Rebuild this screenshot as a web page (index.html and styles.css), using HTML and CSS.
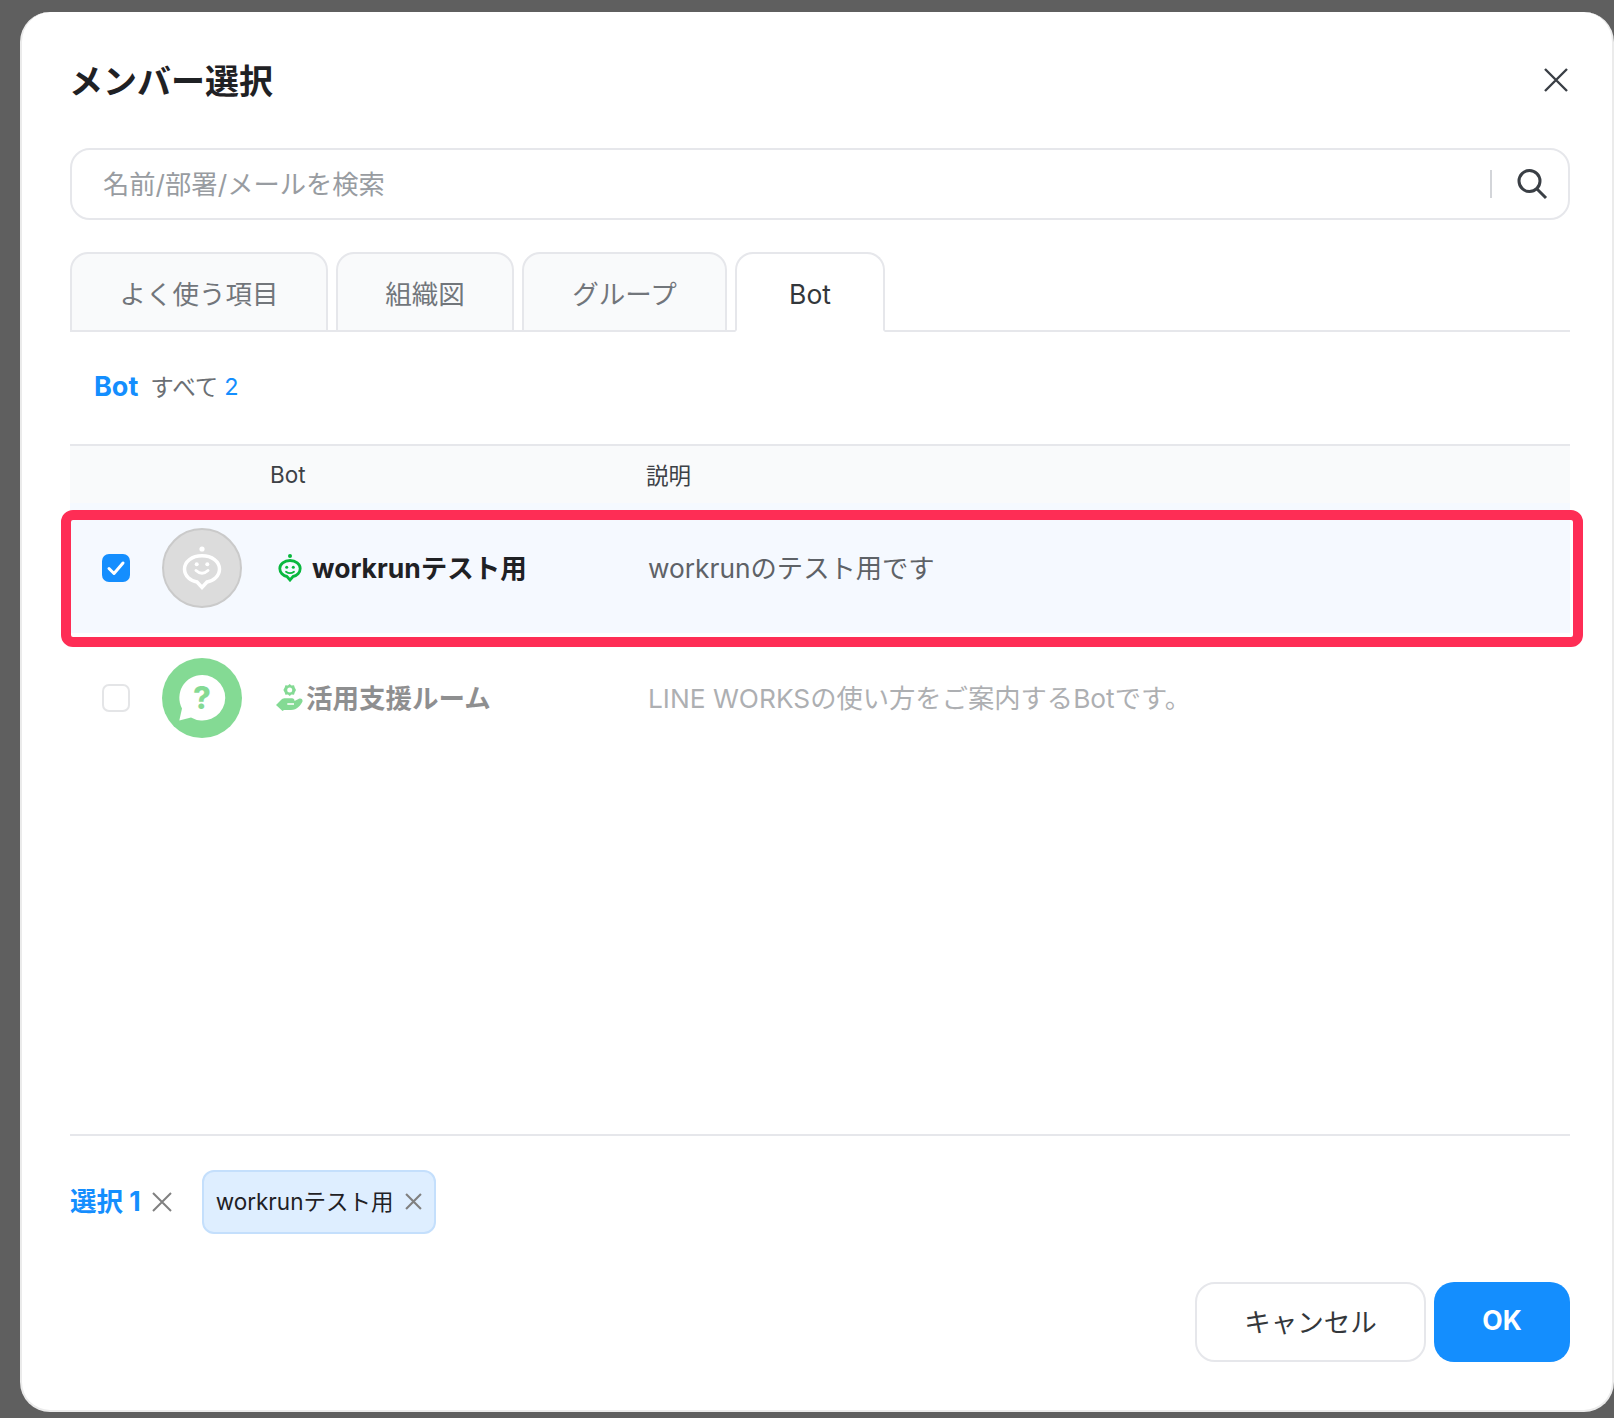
FILE: index.html
```html
<!DOCTYPE html>
<html lang="ja">
<head>
<meta charset="utf-8">
<title>メンバー選択</title>
<link rel="stylesheet" href="styles.css">
</head>
<body>
<div class="modal">
  <header class="head">
    <h1 class="title">メンバー選択</h1>
    <svg class="close" viewBox="0 0 24 24"><path d="M1 1L23 23M23 1L1 23"/></svg>
  </header>
  <div class="search">
    <span class="placeholder">名前/部署/メールを検索</span>
    <span class="sep"></span>
    <svg class="glass" viewBox="0 0 32 32"><circle cx="13.5" cy="13" r="10.5"/><path d="M21 21L30 30"/></svg>
  </div>
  <nav class="tabs">
    <div class="tab t1">よく使う項目</div>
    <div class="tab t2">組織図</div>
    <div class="tab t3">グループ</div>
    <div class="tab t4 active">Bot</div>
  </nav>
  <div class="filter">
    <span class="f-bot">Bot</span><span class="f-all">すべて</span><span class="f-num">2</span>
  </div>
  <div class="thead">
    <span class="th-bot">Bot</span><span class="th-desc">説明</span>
  </div>
  <div class="rows">
    <div class="row selected">
      <span class="check on"><svg viewBox="0 0 28 28"><path d="M7 14.5L12 19.5L21 9"/></svg></span>
      <span class="avatar gray">
        <svg viewBox="0 0 76 76">
          <circle class="a-w" cx="38" cy="19" r="2.600"/>
          <path class="a-head" d="M38 25.700C48 25.700 55.500 31.500 55.500 39C55.500 46 49.500 51 43 52L38 57.500L33 52C26.500 51 20.500 46 20.500 39C20.500 31.500 28 25.700 38 25.700Z"/>
          <circle class="a-w" cx="32.700" cy="34.300" r="2"/><circle class="a-w" cx="43.300" cy="34.300" r="2"/>
          <path class="a-smile" d="M32 40.500Q38 46 44 40.500"/>
        </svg>
      </span>
      <span class="name first">
        <svg class="n-icon bot" viewBox="0 0 24 28">
          <circle class="g-f" cx="12" cy="2" r="2"/>
          <path class="g-s" d="M12 6.500C17.700 6.500 22.200 10 22.200 14.500C22.200 18.500 19 21.800 15 22.500L12 26L9 22.500C5 21.800 1.800 18.500 1.800 14.500C1.800 10 6.300 6.500 12 6.500Z"/>
          <circle class="g-f" cx="8.700" cy="13.300" r="1.500"/><circle class="g-f" cx="15.300" cy="13.300" r="1.500"/>
          <path class="g-t" d="M8 17.700Q12 20.500 16 17.700"/>
        </svg>
        <b class="lift">workrunテスト用</b>
      </span>
      <span class="desc lift">workrunのテスト用です</span>
    </div>
    <div class="row dim">
      <span class="check"></span>
      <span class="avatar green">
        <svg viewBox="0 0 80 80">
          <path class="bubble" d="M40 17A22.800 22.800 0 1 1 29 59.500L17.300 62.500L20 50.500A22.800 22.800 0 0 1 40 17Z"/>
          <text class="q" x="40" y="51">?</text>
        </svg>
      </span>
      <span class="name">
        <svg class="n-icon hand" viewBox="0 0 28 28">
          <path class="h-f" d="M14.700 0L16.500 1.500L19 1.200L19.700 3.500L21 6L19.700 8.500L19 10.800L16.500 10.500L14.700 12L12.900 10.500L10.400 10.800L9.700 8.500L8.400 6L9.700 3.500L10.400 1.200L12.900 1.500Z"/>
          <circle class="h-w" cx="14.700" cy="6" r="2.500"/>
          <path class="h-f" d="M1 21L6.500 15.500C8 14.500 9 14.300 10 14.300L17 14.300C18.500 14.300 19.500 15.300 19.500 16.700L19.500 17L24 14.800C26 14 28 15.500 27.500 17.500C26 21 22 26 16 26L9 26L7.500 27Z"/>
          <path class="h-s" d="M12.300 20L19 20"/>
        </svg>
        <b class="lift">活用支援ルーム</b>
      </span>
      <span class="desc lift">LINE WORKSの使い方をご案内するBotです。</span>
    </div>
    <div class="highlight"></div>
  </div>
  <div class="selection">
    <b class="sel-count lift">選択 1</b>
    <svg class="x big" viewBox="0 0 20 20"><path d="M1 1L19 19M19 1L1 19"/></svg>
    <div class="chip">
      <span class="lift">workrunテスト用</span>
      <svg class="x small" viewBox="0 0 16 16"><path d="M1 1L15 15M15 1L1 15"/></svg>
    </div>
  </div>
  <footer class="actions">
    <button class="btn cancel"><span class="lift">キャンセル</span></button>
    <button class="btn ok"><span class="lift">OK</span></button>
  </footer>
</div>
</body>
</html>
```
FILE: styles.css
```css
* { box-sizing: border-box; }
html, body { margin: 0; height: 100%; }
body {
  background: #5f5f5f;
  padding: 12px 0 0 20px;
  overflow: hidden;
  font-family: Inter, "Noto Sans CJK JP", sans-serif;
  color: #1f2124;
}
.modal {
  width: 1594px;
  height: 1400px;
  background: #fff;
  border: 2px solid #ebebeb;
  border-top: 0;
  border-radius: 30px;
  padding: 0 42px 0 48px;
  display: flex;
  flex-direction: column;
}
.head {
  height: 136px;
  display: flex;
  align-items: center;
  justify-content: space-between;
  flex: none;
}
.title { margin: 3px 0 0 -1px; font-size: 34px; font-weight: 700; line-height: 40px; }
.close { width: 24px; height: 24px; margin-right: 2px; fill: none; stroke: #3a3f45; stroke-width: 2.4; }
.search {
  height: 72px;
  flex: none;
  border: 2px solid #e6e7eb;
  border-radius: 20px;
  display: flex;
  align-items: center;
  padding: 0 20px 0 31px;
}
.placeholder { flex: 1; font-size: 26.300px; color: #989ca1; padding-bottom: 4px; }
.sep { width: 2px; height: 28px; background: #d3d5d9; margin-right: 24px; }
.glass { width: 32px; height: 32px; fill: none; stroke: #3a3f45; stroke-width: 3; }
.tabs {
  margin-top: 32px;
  height: 80px;
  flex: none;
  display: flex;
  gap: 8px;
  border-bottom: 2px solid #e6e7eb;
}
.tab {
  height: 80px;
  background: #f9fafb;
  border: 2px solid #e6e7eb;
  border-radius: 18px 18px 0 0;
  display: flex;
  align-items: center;
  justify-content: center;
  font-size: 26.500px;
  color: #72767b;
}
.t1 { width: 258px; }
.t2 { width: 178px; }
.t3 { width: 205px; }
.t4 { width: 150px; padding-top: 4px; }
.active { background: #fff; border-bottom-color: #fff; color: #33373b; }
.filter {
  height: 112px;
  flex: none;
  display: flex;
  align-items: center;
  padding: 0 0 4px 24px;
  font-size: 23.500px;
}
.f-bot { font-size: 27px; font-weight: 700; color: #148efe; margin-right: 12px; }
.f-all { color: #6b6f74; margin-right: 6px; }
.f-num { color: #148efe; }
.thead {
  height: 59px;
  flex: none;
  background: #f9fafb;
  border-top: 2px solid #e6e7eb;
  display: flex;
  align-items: center;
  font-size: 22.500px;
  color: #3d4146;
}
.th-bot { width: 577px; padding-left: 200px; }
.th-desc { margin-left: -1px; padding-bottom: 2px; }
.rows { position: relative; height: 633px; flex: none; border-bottom: 2px solid #e6e7eb; }
.row { height: 130px; display: flex; align-items: center; padding-left: 32px; }
.selected { background: #f5f9ff; }
.dim > * { opacity: .5; }
.lift { padding-bottom: 4px; }
.check {
  width: 28px;
  height: 28px;
  border: 2px solid #c9cbd0;
  border-radius: 7px;
  flex: none;
  margin-right: 32px;
  display: block;
}
.check.on { background: #148efe; border: 0; }
.check svg { display: block; width: 28px; height: 28px; fill: none; stroke: #fff; stroke-width: 3; stroke-linecap: round; stroke-linejoin: round; }
.avatar { width: 80px; height: 80px; border-radius: 50%; flex: none; }
.avatar svg { display: block; width: 100%; height: 100%; }
.gray { background: #dcdcdc; border: 2px solid #cacaca; }
.green { background: #0cb72c; }
.a-w { fill: #fff; }
.a-head { fill: none; stroke: #fff; stroke-width: 3.500; }
.a-smile { fill: none; stroke: #fff; stroke-width: 3; stroke-linecap: round; }
.bubble { fill: #fff; }
.q { font-size: 31px; font-weight: 800; fill: #0cb72c; text-anchor: middle; }
.name { width: 406px; padding-left: 36px; display: flex; align-items: center; font-size: 26.500px; flex: none; }
.name b { font-weight: 700; }
.n-icon { flex: none; display: block; }
.bot { width: 24px; height: 28px; margin-right: 10px; }
.g-f { fill: #09b83e; }
.g-s { fill: none; stroke: #09b83e; stroke-width: 2.800; }
.g-t { fill: none; stroke: #09b83e; stroke-width: 1.800; stroke-linecap: round; }
.hand { width: 28px; height: 28px; margin: 0 3px 0 -3px; }
.h-f { fill: #0cb72c; }
.h-w { fill: #fff; }
.h-s { fill: none; stroke: #fff; stroke-width: 1.600; }
.desc { font-size: 26.300px; color: #5e6267; }
.highlight {
  position: absolute;
  left: -9px;
  right: -13px;
  top: 7px;
  height: 137px;
  border: 10px solid #fe2d55;
  border-radius: 12px;
  pointer-events: none;
}
.selection { height: 131px; flex: none; display: flex; align-items: center; }
.sel-count { font-size: 26.500px; font-weight: 700; color: #148efe; }
.x { fill: none; stroke: #808080; stroke-width: 2; flex: none; }
.big { width: 20px; height: 20px; margin-left: 11px; margin-right: 30px; }
.chip {
  height: 64px;
  width: 234px;
  flex: none;
  background: #deeeff;
  border: 2px solid #c4dffc;
  border-radius: 12px;
  display: flex;
  align-items: center;
  justify-content: space-between;
  padding: 0 12px;
  font-size: 22.500px;
  color: #1f2124;
}
.small { width: 17px; height: 17px; }
.actions { flex: none; margin-top: 15px; display: flex; justify-content: flex-end; gap: 8px; }
.btn {
  height: 80px;
  font-family: inherit;
  font-size: 26.500px;
  border-radius: 20px;
  padding: 0;
}
.btn .lift { display: block; }
.cancel { width: 231px; background: #fff; border: 2px solid #e6e7eb; color: #33373b; }
.ok { width: 136px; background: #148efe; border: 0; color: #fff; font-weight: 700; }
```
